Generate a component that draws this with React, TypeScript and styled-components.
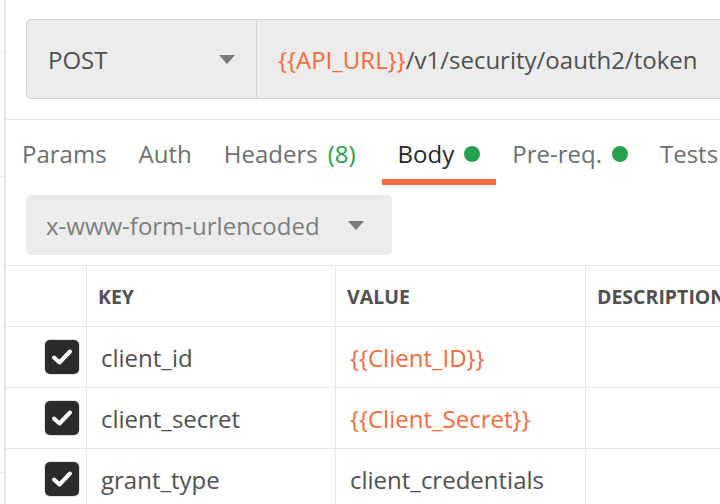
import React from "react";
import styled, { createGlobalStyle } from "styled-components";

const Global = createGlobalStyle`
  html, body { margin: 0; padding: 0; background: #ffffff; }
  body { font-family: "Open Sans", "DejaVu Sans", sans-serif; overflow: hidden; }
  * { box-sizing: border-box; }
`;

const ORANGE = "#f26b3a";
const GREEN = "#26a04d";
const TEXT = "#505050";

const Page = styled.div`
  display: flex;
  width: 720px;
  height: 504px;
  overflow: hidden;
`;

const Sidebar = styled.div`
  width: 6px;
  flex-shrink: 0;
  border-right: 2px solid #e6e6e6;
  display: flex;
  flex-direction: column;
`;

const SideItem = styled.div<{ $h: number }>`
  height: ${(p) => p.$h}px;
  border-bottom: 1px solid #ececec;
  flex-shrink: 0;
`;

const Main = styled.div`
  flex: 1;
  min-width: 0;
  display: flex;
  flex-direction: column;
  & > * { flex-shrink: 0; }
`;

const TopBar = styled.div`
  padding: 19px 0 20px 20px;
  border-bottom: 1px solid #e6e6e6;
`;

const RequestBox = styled.div`
  display: flex;
  height: 80px;
  width: 760px;
  background: #ececec;
  border: 1px solid #d3d3d3;
  border-radius: 5px;
  font-size: 24px;
`;

const Method = styled.div`
  width: 230px;
  flex-shrink: 0;
  display: flex;
  align-items: center;
  justify-content: space-between;
  padding: 0 21px 0 21px;
  border-right: 1px solid #d3d3d3;
  color: ${TEXT};
`;

const Caret = styled.span<{ $color?: string }>`
  width: 0;
  height: 0;
  border-left: 8px solid transparent;
  border-right: 8px solid transparent;
  border-top: 9px solid ${(p) => p.$color || "#7a7a7a"};
`;

const UrlText = styled.div`
  display: flex;
  align-items: center;
  padding-left: 21px;
  color: ${TEXT};
  white-space: nowrap;
`;

const Var = styled.span`
  color: ${ORANGE};
`;

const Tabs = styled.div`
  display: flex;
  height: 65px;
  white-space: nowrap;
`;

const Tab = styled.div<{ $active?: boolean }>`
  display: flex;
  align-items: flex-start;
  gap: 10px;
  padding: 17px 16px 0 16px;
  font-size: 24px;
  line-height: 33px;
  color: ${(p) => (p.$active ? "#282828" : "#6e6e6e")};
  border-bottom: 6px solid ${(p) => (p.$active ? ORANGE : "transparent")};
`;

const Count = styled.span`
  color: ${GREEN};
  margin-left: 10px;
  margin-right: 10px;
`;

const Dot = styled.span`
  width: 16px;
  height: 16px;
  border-radius: 50%;
  background: ${GREEN};
  margin-top: 9px;
`;

const BodyType = styled.div`
  margin: 10px 0 10px 20px;
  width: 366px;
  height: 60px;
  border-radius: 5px;
  background: #ececec;
  display: flex;
  align-items: center;
  justify-content: space-between;
  padding: 0 28px 0 20px;
  font-size: 24px;
  color: #7e7e7e;
`;

const Table = styled.div`
  display: grid;
  grid-template-columns: 80px 249px 250px 1fr;
  border-top: 1px solid #e6e6e6;
  width: 800px;
`;

const Cell = styled.div<{ $head?: boolean; $orange?: boolean; $first?: boolean }>`
  height: 61px;
  display: flex;
  align-items: center;
  border-bottom: 1px solid #e6e6e6;
  border-left: ${(p) => (p.$first ? "none" : "1px solid #e6e6e6")};
  padding-left: ${(p) => (p.$head ? 11 : 14)}px;
  font-size: ${(p) => (p.$head ? "19.5px" : "24px")};
  font-weight: ${(p) => (p.$head ? 700 : 400)};
  color: ${(p) => (p.$orange ? ORANGE : TEXT)};
  white-space: nowrap;
`;

const CheckCell = styled(Cell)`
  padding-left: 39px;
`;

const CheckBox = styled.span`
  width: 34px;
  height: 34px;
  border-radius: 5px;
  background: #2b2b2b;
  box-shadow: 0 0 0 1px #e2e2e2;
  display: flex;
  align-items: center;
  justify-content: center;
`;

const rows: { key: string; value: string; isVar: boolean }[] = [
  { key: "client_id", value: "{{Client_ID}}", isVar: true },
  { key: "client_secret", value: "{{Client_Secret}}", isVar: true },
  { key: "grant_type", value: "client_credentials", isVar: false },
];

export default function App() {
  return (
    <>
      <Global />
      <Page>
        <Sidebar>
          <SideItem $h={53} />
          <SideItem $h={124} />
          <SideItem $h={296} />
        </Sidebar>
        <Main>
          <TopBar>
            <RequestBox>
              <Method>
                <span>POST</span>
                <Caret />
              </Method>
              <UrlText>
                <Var>{"{{API_URL}}"}</Var>/v1/security/oauth2/token
              </UrlText>
            </RequestBox>
          </TopBar>
          <Tabs>
            <Tab>Params</Tab>
            <Tab>Auth</Tab>
            <Tab>
              <span>
                Headers<Count>(8)</Count>
              </span>
            </Tab>
            <Tab $active>
              <span>Body</span>
              <Dot />
            </Tab>
            <Tab>
              <span>Pre-req.</span>
              <Dot />
            </Tab>
            <Tab>Tests</Tab>
          </Tabs>
          <BodyType>
            <span>x-www-form-urlencoded</span>
            <Caret $color="#7a7a7a" />
          </BodyType>
          <Table>
            <Cell $head $first />
            <Cell $head>KEY</Cell>
            <Cell $head>VALUE</Cell>
            <Cell $head>DESCRIPTION</Cell>
            {rows.map((r) => (
              <React.Fragment key={r.key}>
                <CheckCell $first>
                  <CheckBox>
                    <svg width="22" height="18" viewBox="0 0 22 18">
                      <path
                        d="M3 9.5 L8.5 14.5 L19 3.5"
                        fill="none"
                        stroke="#ffffff"
                        strokeWidth="4"
                        strokeLinecap="round"
                        strokeLinejoin="round"
                      />
                    </svg>
                  </CheckBox>
                </CheckCell>
                <Cell>{r.key}</Cell>
                <Cell $orange={r.isVar}>{r.value}</Cell>
                <Cell />
              </React.Fragment>
            ))}
          </Table>
        </Main>
      </Page>
    </>
  );
}
